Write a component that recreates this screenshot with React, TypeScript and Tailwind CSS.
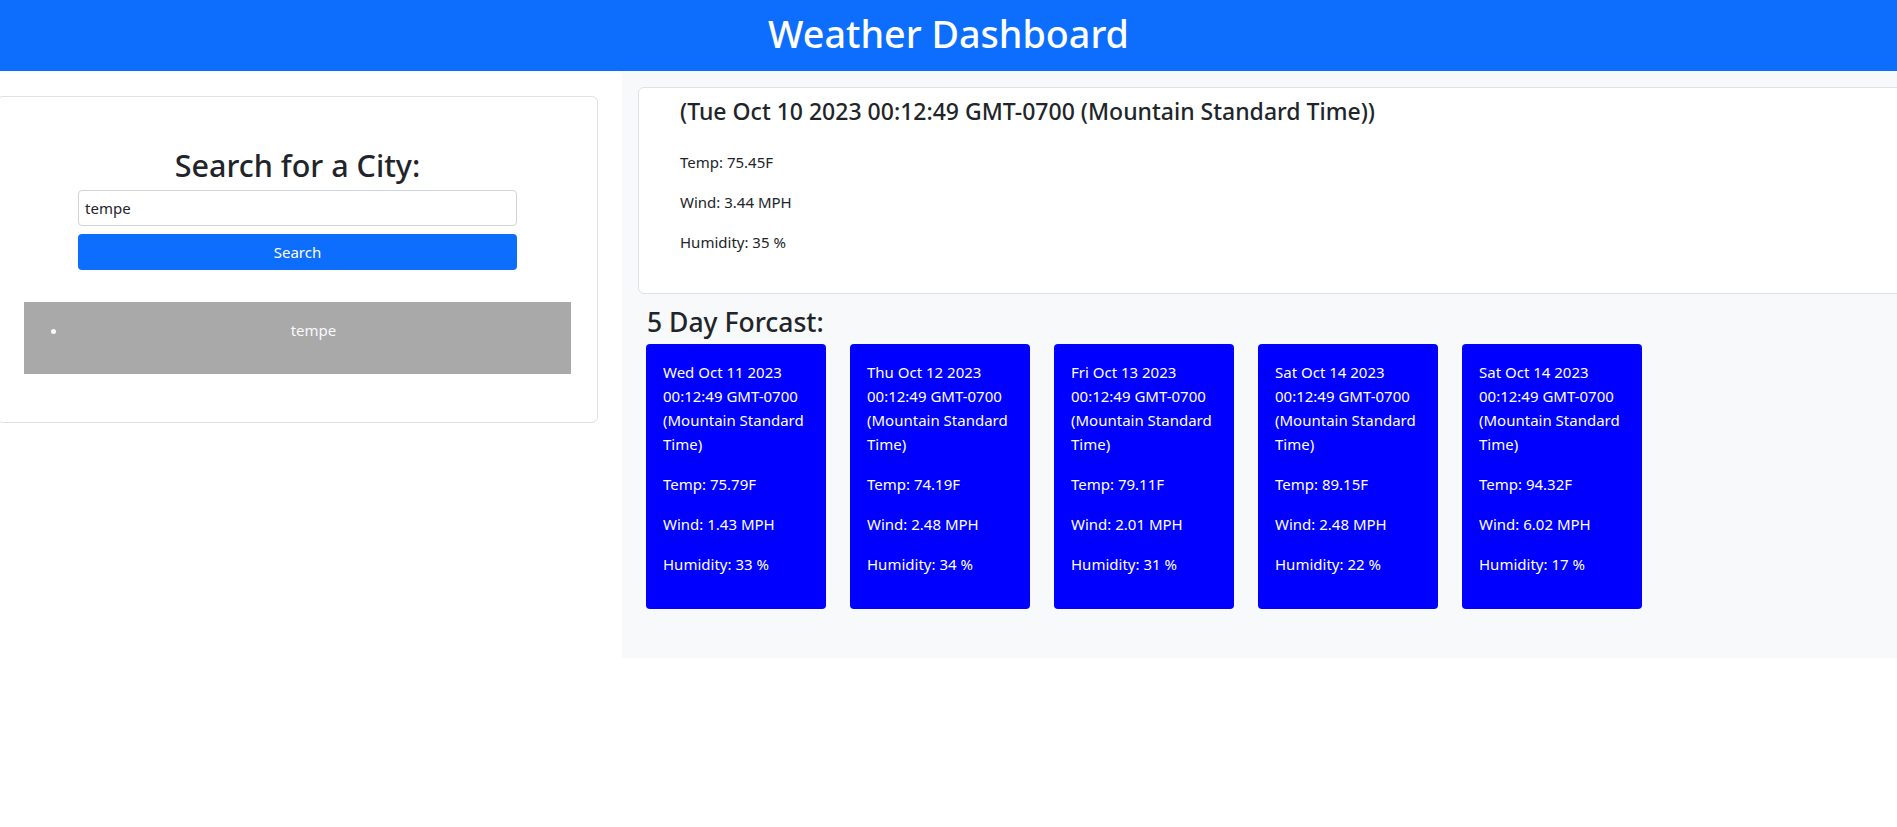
const forecast = [
  { date: "Wed Oct 11 2023 00:12:49 GMT-0700 (Mountain Standard Time)", temp: "75.79", wind: "1.43", humidity: "33" },
  { date: "Thu Oct 12 2023 00:12:49 GMT-0700 (Mountain Standard Time)", temp: "74.19", wind: "2.48", humidity: "34" },
  { date: "Fri Oct 13 2023 00:12:49 GMT-0700 (Mountain Standard Time)", temp: "79.11", wind: "2.01", humidity: "31" },
  { date: "Sat Oct 14 2023 00:12:49 GMT-0700 (Mountain Standard Time)", temp: "89.15", wind: "2.48", humidity: "22" },
  { date: "Sat Oct 14 2023 00:12:49 GMT-0700 (Mountain Standard Time)", temp: "94.32", wind: "6.02", humidity: "17" },
];

function SearchPanel() {
  return (
    <aside className="w-[622px] shrink-0 pt-[25px]">
      <div className="-ml-[3px] mr-6 rounded-md border border-[#dee2e6] bg-white pt-[49px] pb-[48px]">
        <h2 className="text-center text-[30.5px] font-medium leading-[38px] text-[#212529]">Search for a City:</h2>
        <form className="mx-20 mt-[6px] flex flex-col gap-2" onSubmit={(e) => e.preventDefault()}>
          <input
            defaultValue="tempe"
            className="h-9 rounded-[4px] border border-[#ced4da] px-[6px] text-[15px] text-[#212529] outline-none"
          />
          <button type="submit" className="h-9 rounded-[4px] bg-[#0d6efd] text-[15px] text-white">
            Search
          </button>
        </form>
        <div className="mx-[26px] mt-8 bg-[#a9a9a9] pt-4 pb-8">
          <ul className="list-disc pl-[44px] pr-3 text-[#f8f9fa]">
            <li className="text-center text-[15px] leading-6">tempe</li>
          </ul>
        </div>
      </div>
    </aside>
  );
}

function CurrentWeather() {
  return (
    <div className="-mr-6 rounded-md border border-[#dee2e6] bg-white pt-[9px] pb-[39px] pl-[41px]">
      <h3 className="text-[23px] font-medium leading-[29px] text-[#212529]">
        (Tue Oct 10 2023 00:12:49 GMT-0700 (Mountain Standard Time))
      </h3>
      <div className="mt-6 flex flex-col gap-4 text-[15px] leading-6 text-[#212529]">
        <p>Temp: 75.45F</p>
        <p>Wind: 3.44 MPH</p>
        <p>Humidity: 35 %</p>
      </div>
    </div>
  );
}

function ForecastCard({ day }: { day: (typeof forecast)[number] }) {
  return (
    <div className="h-[265px] w-[180px] rounded-[4px] bg-[#0000ff] px-[17px] pt-4 text-[15px] leading-6 text-white">
      <p className="mb-4">{day.date}</p>
      <p className="mb-4">Temp: {day.temp}F</p>
      <p className="mb-4">Wind: {day.wind} MPH</p>
      <p>Humidity: {day.humidity} %</p>
    </div>
  );
}

export default function App() {
  return (
    <div className="min-h-screen overflow-hidden bg-white font-['Segoe_UI','Noto_Sans',sans-serif] text-[#212529]">
      <header className="flex h-[71px] items-center justify-center bg-[#0d6efd] pb-1">
        <h1 className="text-[37.7px] font-medium leading-[48px] text-white">Weather Dashboard</h1>
      </header>
      <main className="flex items-start">
        <SearchPanel />
        <section className="min-w-0 flex-1 bg-[#f8f9fa] pt-4 pl-4 pb-[49px]">
          <CurrentWeather />
          <h3 className="mt-[11px] ml-[9px] text-[26.5px] font-medium leading-[34px] text-[#212529]">5 Day Forcast:</h3>
          <div className="mt-[5px] ml-2 flex gap-6">
            {forecast.map((day, i) => (
              <ForecastCard key={i} day={day} />
            ))}
          </div>
        </section>
      </main>
    </div>
  );
}
